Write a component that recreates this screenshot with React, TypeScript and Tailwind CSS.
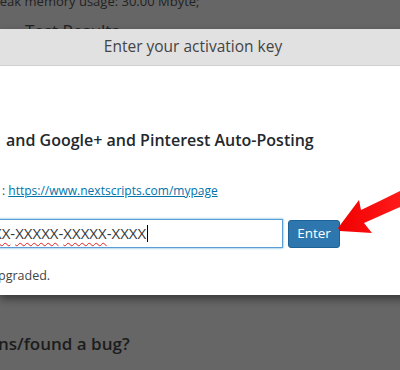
import React from 'react'

const App = () => {
  return (
    <div className="relative w-[400px] h-[370px] overflow-hidden bg-[#666666] font-['Open_Sans',sans-serif]">
      {/* page behind the overlay */}
      <div className="text-[#222]">
        <p className="-mt-[9px] -ml-[8px] text-[13px] leading-[20px]">Peak memory usage: 30.00 Mbyte;</p>
        <p className="mt-[8px] ml-[25px] text-[17px] leading-[24px]">Test Results</p>
        <h2 className="mt-[289px] -ml-[2px] text-[17px] leading-[24px] font-semibold text-[#1c1c1c]">ns/found a bug?</h2>
      </div>

      {/* modal */}
      <div className="absolute top-[29px] left-0 -right-[20px] bg-white shadow-[0_4px_8px_rgba(0,0,0,0.45)]">
        <div className="h-[37px] bg-[#e1e1e1] border-b border-[#cfcfcf] flex items-center justify-center pr-[34px]">
          <span className="text-[15.5px] leading-[20px] -mt-[3px] text-[#444]">Enter your activation key</span>
        </div>
        <div className="pt-[62px] pb-[9px]">
          <h3 className="pl-[6px] text-[16px] leading-[24px] font-semibold text-[#23282d] whitespace-nowrap">and Google+ and Pinterest Auto-Posting</h3>
          <p className="mt-[29px] pl-[2px] text-[12px] leading-[20px] text-[#444] whitespace-nowrap">
            : <a className="text-[#0073aa] underline">https://www.nextscripts.com/mypage</a>
          </p>
          <div className="mt-[18px] flex items-center">
            <div className="-ml-[20px] w-[303px] h-[29px] border border-[#5b9dd9] shadow-[0_0_2px_rgba(30,140,190,0.8)] flex items-center pl-[12px] text-[15px] text-[#32373c] whitespace-nowrap">
              <span className="underline decoration-wavy decoration-[#e02020] decoration-1 underline-offset-[3px]">XX</span>
              <span>-</span>
              <span className="underline decoration-wavy decoration-[#e02020] decoration-1 underline-offset-[3px]">XXXXX</span>
              <span>-</span>
              <span className="underline decoration-wavy decoration-[#e02020] decoration-1 underline-offset-[3px]">XXXXX</span>
              <span>-XXXX</span>
              <span className="ml-[1px] w-[1px] h-[17px] bg-black" />
            </div>
            <button className="ml-[5px] w-[52px] h-[28px] bg-[#2d77ae] border border-[#1e6397] rounded-[3px] text-white text-[13.5px] leading-none">
              Enter
            </button>
          </div>
          <p className="mt-[18px] -ml-[2px] text-[12.5px] leading-[20px] text-[#444]">pgraded.</p>
        </div>
      </div>

      {/* annotation arrow */}
      <svg className="absolute left-0 top-0" width="400" height="370" viewBox="0 0 400 370">
        <defs>
          <linearGradient id="arr" x1="0" y1="0" x2="1" y2="0">
            <stop offset="0" stopColor="#f00000" />
            <stop offset="1" stopColor="#ff1a1a" />
          </linearGradient>
        </defs>
        <path
          d="M338 228 L359 200 L361 210 Q380 201 400 191 L400 207 Q382 215 364 223 L372 233 L340 231 Z"
          fill="url(#arr)"
        />
      </svg>
    </div>
  )
}

export default App
